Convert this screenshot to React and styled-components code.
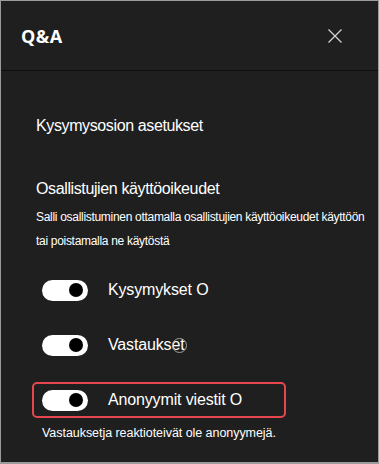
import React from "react";
import styled, { createGlobalStyle } from "styled-components";

const GlobalStyle = createGlobalStyle`
  html, body {
    margin: 0;
    padding: 0;
    background: #ffffff;
  }
  * {
    box-sizing: border-box;
  }
`;

const Panel = styled.div`
  width: 379px;
  height: 464px;
  background: #1f1f1f;
  border: 1px solid #9b9b9b;
  border-bottom-width: 2px;
  font-family: "Liberation Sans", Arial, sans-serif;
  color: #ffffff;
  display: flex;
  flex-direction: column;
`;

const Header = styled.div`
  height: 70px;
  flex: none;
  display: flex;
  align-items: center;
  justify-content: space-between;
  padding: 0 35px 0 20px;
  border-bottom: 1px solid #0e0e0e;
`;

const Title = styled.h1`
  margin: 0;
  font-family: "Open Sans", sans-serif;
  font-size: 18px;
  font-weight: 700;
  letter-spacing: 0.4px;
`;

const CloseButton = styled.button`
  width: 16px;
  height: 16px;
  padding: 0;
  border: none;
  background: none;
  color: #d6d6d6;
  display: flex;
  cursor: pointer;
`;

const Body = styled.div`
  display: flex;
  flex-direction: column;
  padding: 45px 10px 0 35px;
`;

const SectionTitle = styled.div`
  font-size: 16px;
  letter-spacing: -0.38px;
  line-height: 20px;
  margin-bottom: ${(p) => p.$gap || 0}px;
`;

const Hint = styled.p`
  margin: 6px 0 0;
  font-size: 12px;
  letter-spacing: -0.3px;
  line-height: 24px;
  white-space: nowrap;
`;

const Options = styled.div`
  display: flex;
  flex-direction: column;
  gap: 19px;
  margin-top: 19px;
`;

const OptionRow = styled.div`
  display: flex;
  align-items: center;
  gap: 20px;
  height: 36px;
  width: 254px;
  margin-left: -4px;
  padding-left: 8px;
  border: 2px solid ${(p) => (p.$highlight ? "#e8464e" : "transparent")};
  border-radius: 5px;
`;

const Toggle = styled.span`
  width: 46px;
  height: 21px;
  border-radius: 11px;
  background: #ffffff;
  position: relative;
  flex: none;

  &::after {
    content: "";
    position: absolute;
    right: 5px;
    top: 3.5px;
    width: 14px;
    height: 14px;
    border-radius: 50%;
    background: #000000;
  }
`;

const OptionLabel = styled.span`
  font-size: 16px;
  letter-spacing: -0.15px;
  position: relative;
`;

const Cursor = styled.span`
  position: absolute;
  right: -3px;
  top: 2px;
  width: 15px;
  height: 15px;
  border-radius: 50%;
  border: 1.5px solid #a0a0a0;
`;

const Note = styled.p`
  margin: 7px 0 0 6px;
  font-size: 12.5px;
  letter-spacing: -0.05px;
  line-height: 16px;
`;

const options = [
  { label: "Kysymykset O" },
  { label: "Vastaukset", cursor: true },
  { label: "Anonyymit viestit O", highlight: true },
];

export default function App() {
  return (
    <>
      <GlobalStyle />
      <Panel>
        <Header>
          <Title>Q&amp;A</Title>
          <CloseButton aria-label="Sulje">
            <svg width="16" height="16" viewBox="0 0 16 16">
              <path d="M1.5 1.5 L14.5 14.5 M14.5 1.5 L1.5 14.5" stroke="currentColor" strokeWidth="1.2" />
            </svg>
          </CloseButton>
        </Header>
        <Body>
          <SectionTitle $gap={43}>Kysymysosion asetukset</SectionTitle>
          <SectionTitle>Osallistujien käyttöoikeudet</SectionTitle>
          <Hint>
            Salli osallistuminen ottamalla osallistujien käyttöoikeudet käyttöön
            <br />
            tai poistamalla ne käytöstä
          </Hint>
          <Options>
            {options.map((o) => (
              <OptionRow key={o.label} $highlight={o.highlight}>
                <Toggle />
                <OptionLabel>
                  {o.label}
                  {o.cursor && <Cursor />}
                </OptionLabel>
              </OptionRow>
            ))}
          </Options>
          <Note>Vastauksetja reaktioteivät ole anonyymejä.</Note>
        </Body>
      </Panel>
    </>
  );
}
